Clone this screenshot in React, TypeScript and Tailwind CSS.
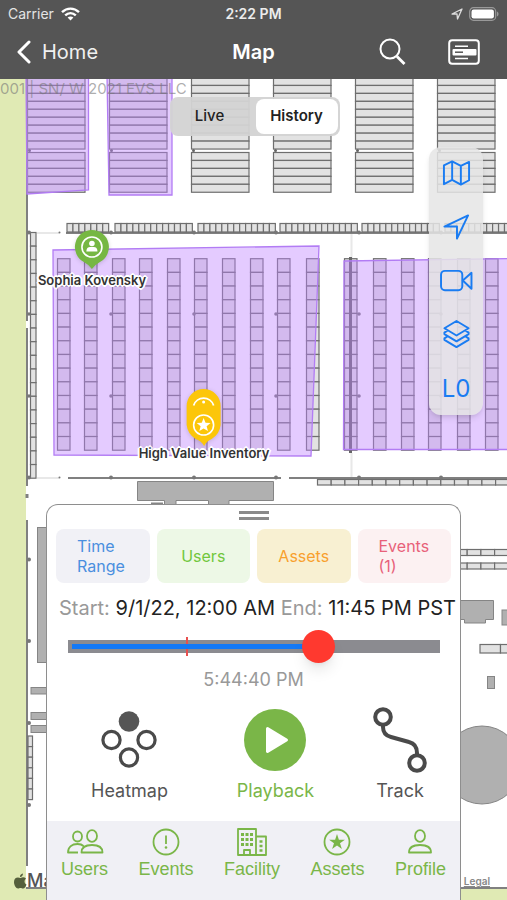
import { useState } from "react";
import type { ReactNode } from "react";

// Map geometry. The canvas starts at y = 79, below the navigation bar.
const topRacks = [27, 109, 191, 273, 355, 437];
const yardColumns = [57, 84, 112, 139, 167, 194, 222, 250, 277, 306, 344, 373, 401, 428, 457, 485];
const fenceRows = [
  { x: 67, cells: 7 },
  { x: 115, cells: 13 },
  { x: 198, cells: 13 },
  { x: 280, cells: 13 },
  { x: 362, cells: 13 },
  { x: 445, cells: 13 },
];
const posts = [29, 111, 194, 276, 359, 441];

interface CellsProps {
  x: number;
  y: number;
  w: number;
  h: number;
  count: number;
  horizontal?: boolean;
}

function Cells({ x, y, w, h, count, horizontal }: CellsProps) {
  return (
    <g fill="#e2e2e2" stroke="#6e6e6e" strokeWidth="1.2">
      {Array.from({ length: count }, (_, i) => (
        <rect
          key={i}
          x={horizontal ? x + i * w : x}
          y={horizontal ? y : y + i * h}
          width={w}
          height={h}
        />
      ))}
    </g>
  );
}

function MapCanvas() {
  return (
    <svg
      viewBox="0 79 507 821"
      preserveAspectRatio="xMinYMin slice"
      className="absolute inset-0 h-full w-full"
      aria-hidden="true"
    >
      <rect x="0" y="79" width="507" height="821" fill="#fff" />
      <rect x="0" y="79" width="26" height="821" fill="#e0eab4" />
      <rect x="0" y="889" width="507" height="11" fill="#e0eab4" />

      {/* Warehouse racks */}
      {topRacks.map((x) => (
        <g key={x}>
          <Cells x={x + 0.5} y={77.5} w={57.5} h={7.95} count={9} />
          <Cells x={x + 0.5} y={152.5} w={57.5} h={7.95} count={5} />
          <circle cx={x + 2.5} cy="150.5" r="1.5" fill="#666" />
        </g>
      ))}

      {/* Walls */}
      <g stroke="#808080" strokeWidth="2" fill="none">
        <path d="M27 79V321M27 328V486M27 520V866M66 233H507M68 478H281M289 478H507M26 888H507" />
        <path d="M27 494v4" strokeWidth="3" />
      </g>
      <path d="M37 233h22M37 478h22M351.5 234v24M351.5 453v24" stroke="#e8e8e8" strokeWidth="2" />

      {fenceRows.map((row) => (
        <Cells key={row.x} x={row.x} y={223.5} w={5.95} h={8.5} count={row.cells} horizontal />
      ))}
      <Cells x={30.5} y={232.5} w={5.5} h={13.65} count={18} />
      <Cells x={317.5} y={479.5} w={13.7} h={5.5} count={14} horizontal />

      {/* Yard */}
      {yardColumns.map((x) => (
        <Cells key={x} x={x + 0.5} y={258.7} w={12.5} h={13.68} count={14} />
      ))}
      <path d="M350.5 257V453" stroke="#666" strokeWidth="3" />
      <g fill="#777">
        {posts.map((x) => (
          <g key={x}>
            <circle cx={x} cy="232.5" r="2" />
            <circle cx={x} cy="314" r="1.8" />
            <circle cx={x} cy="396" r="1.8" />
            <circle cx={x} cy="477.5" r="2" />
          </g>
        ))}
        <circle cx="59.5" cy="232.5" r="1" />
        <circle cx="59.5" cy="477.5" r="1" />
        <circle cx="29" cy="559.5" r="2" />
        <circle cx="29" cy="641" r="2" />
        <circle cx="29" cy="723" r="2" />
        <circle cx="29" cy="805" r="2" />
      </g>

      {/* Zones */}
      <g fill="rgba(190,130,255,0.42)" stroke="#b27cf4" strokeWidth="1.3">
        <path d="M26 75H88.5V190L27 194Z" />
        <path d="M107 75H172V195H109Z" />
        <path d="M53 250L319 246L311 456L54 455Z" />
        <path d="M344 261L510 258.5V449.5H343.5Z" />
      </g>

      {/* Buildings */}
      <g fill="#b0b0b0" stroke="#858585" strokeWidth="1">
        <path d="M137.5 481.5H273.5V500.5H229V505H208.5V500.5H176V505H164.5V500.5H137.5Z" />
        <path d="M151 503.5h12" strokeWidth="2" />
        <rect x="37.5" y="527.5" width="16" height="135" />
        <rect x="31" y="687.5" width="20" height="6.5" />
        <rect x="31" y="712.5" width="20" height="7" />
        <rect x="31" y="725.5" width="20" height="7" />
        <path d="M455 600.5H493.5V619.5H485.5V623H464.5V619.5H455Z" />
        <rect x="502" y="610" width="12" height="15" />
        <rect x="487.5" y="676.5" width="7" height="12" />
        <circle cx="482" cy="765" r="39" />
      </g>
      <Cells x={28} y={736} w={4.5} h={10.6} count={6} />
      <Cells x={453.5} y={549.5} w={13.7} h={6} count={4} horizontal />
      <Cells x={453.5} y={563} w={13.7} h={6} count={4} horizontal />
      <Cells x={480} y={644.5} w={20.5} h={8.5} count={2} horizontal />
    </svg>
  );
}

function StatusBar() {
  return (
    <div className="grid h-7 grid-cols-3 items-center px-2 text-sm">
      <span className="flex items-center gap-[7px] text-[#e4e4e4]">
        Carrier
        <svg width="19" height="14" viewBox="0 0 19 14" fill="none" stroke="#fff" strokeWidth="2.4" aria-hidden="true">
          <path d="M1 5.2C6 .4 13 .4 18 5.2M4.2 8.4c3.2-3 7.4-3 10.6 0" />
          <path d="M9.5 13.5L6.6 10.6c1.7-1.5 4.1-1.5 5.8 0Z" fill="#fff" stroke="none" />
        </svg>
      </span>
      <span className="text-center font-semibold text-[#ececec]">2:22 PM</span>
      <span className="flex items-center justify-end gap-[6px]">
        <svg width="12" height="12" viewBox="0 0 12 12" fill="none" stroke="#ddd" strokeWidth="1.3" strokeLinejoin="round" aria-hidden="true">
          <path d="M1 6L11 1L6.5 11L6 6Z" />
        </svg>
        <svg width="30" height="14" viewBox="0 0 30 14" aria-hidden="true">
          <rect x=".7" y=".7" width="26" height="12.6" rx="3.8" fill="none" stroke="#999" strokeWidth="1.2" />
          <rect x="2.5" y="2.5" width="22.4" height="9" rx="2.2" fill="#fff" />
          <path d="M28 4.5c2 .8 2 4.2 0 5Z" fill="#999" />
        </svg>
      </span>
    </div>
  );
}

function NavBar() {
  return (
    <nav className="grid h-[51px] grid-cols-3 items-center pr-[27px] pb-[3px] pl-4 text-xl">
      <a href="#home" className="flex items-center gap-[10px] text-[#f0f0f0]">
        <svg width="16" height="24" viewBox="0 0 16 24" fill="none" stroke="#fff" strokeWidth="3" strokeLinecap="round" strokeLinejoin="round" aria-hidden="true">
          <path d="M13 2L3 12L13 22" />
        </svg>
        Home
      </a>
      <h1 className="pl-[11px] text-center font-semibold">Map</h1>
      <div className="flex items-center justify-end gap-[42px]">
        <button type="button" aria-label="Search">
          <svg width="27" height="28" viewBox="0 0 27 28" fill="none" stroke="#fff" strokeWidth="2" aria-hidden="true">
            <circle cx="11" cy="11" r="9.5" />
            <path d="M18 18.5L25.5 26" strokeWidth="2.8" />
          </svg>
        </button>
        <button type="button" aria-label="Details">
          <svg width="32" height="26" viewBox="0 0 32 26" fill="none" stroke="#fff" aria-hidden="true">
            <rect x="1.2" y="1.2" width="29.6" height="23.6" rx="3" strokeWidth="2" />
            <rect x="4.5" y="10" width="24" height="6.4" rx="1" fill="#fff" stroke="none" />
            <path d="M7 7.2h13M7 19.5h13" strokeWidth="1.5" />
            <path d="M7 13.2h8" stroke="#555" strokeWidth="1.5" />
          </svg>
        </button>
      </div>
    </nav>
  );
}

const toolIcons: { label: string; icon: ReactNode }[] = [
  {
    label: "Map type",
    icon: <path d="M2 6.5L10.5 2.5L19.5 7L28 3V22L19.5 26.5L10.5 21.5L2 26ZM10.5 2.5V21.5M19.5 7V26.5" />,
  },
  { label: "Locate", icon: <path d="M2.5 14L27 2.5L15.5 26.5V14Z" /> },
  {
    label: "Camera",
    icon: (
      <>
        <rect x="-1" y="4" width="22" height="20" rx="4" />
        <path d="M21.5 14L30.5 6V22.5Z" />
      </>
    ),
  },
  {
    label: "Layers",
    icon: (
      <path d="M15 0L27.5 7.5L15 15L2.5 7.5ZM5.5 10L2.5 12V13.5L15 21L27.5 13.5V12L24.5 10M5.5 16L2.5 18V19.5L15 27L27.5 19.5V18L24.5 16" />
    ),
  },
];

function ToolPanel() {
  return (
    <div className="relative mt-[11px] mr-6 flex w-[54px] flex-col items-center gap-[25px] self-end rounded-xl bg-[#e5e5e5]/85 pt-3 pb-3 shadow-md">
      {toolIcons.map((tool) => (
        <button key={tool.label} type="button" aria-label={tool.label}>
          <svg width="29" height="29" viewBox="0 0 30 30" overflow="visible" fill="none" stroke="#1a7cf2" strokeWidth="2" strokeLinejoin="round" aria-hidden="true">
            {tool.icon}
          </svg>
        </button>
      ))}
      <button type="button" className="text-2xl leading-7 text-[#1a7cf2]">
        L0
      </button>
    </div>
  );
}

function ModeSwitch() {
  const [mode, setMode] = useState("History");
  return (
    <div className="relative mt-[18px] ml-[2px] flex h-[39px] w-[170px] justify-between self-center rounded-lg bg-[#d3d3d3]/95 p-[2px] text-[15px] text-[#222]">
      <button
        type="button"
        aria-pressed={mode === "Live"}
        onClick={() => setMode("Live")}
        className={`w-[76px] rounded-lg ${mode === "Live" ? "bg-white font-semibold" : "font-medium"}`}
      >
        Live
      </button>
      <button
        type="button"
        aria-pressed={mode === "History"}
        onClick={() => setMode("History")}
        className={`w-[82px] rounded-lg ${mode === "History" ? "bg-white font-semibold" : "font-medium"}`}
      >
        History
      </button>
    </div>
  );
}

const outline =
  "whitespace-nowrap text-[13px] leading-4 font-semibold text-[#333] [text-shadow:1px_1px_0_#fff,-1px_-1px_0_#fff,1px_-1px_0_#fff,-1px_1px_0_#fff,2px_0_0_#fff,-2px_0_0_#fff,0_2px_0_#fff,0_-2px_0_#fff]";

function MapPins() {
  return (
    <>
      <div className="absolute top-[150px] left-[92px] flex -translate-x-1/2 flex-col items-center gap-[2px]">
        <svg width="38" height="41" viewBox="0 0 38 41" className="drop-shadow-sm" aria-hidden="true">
          <path d="M19 1a17 17 0 0 1 8 32Q23 35 19 40Q15 35 11 33A17 17 0 0 1 19 1Z" fill="#76b743" />
          <circle cx="19" cy="18" r="10" fill="none" stroke="#fff" strokeWidth="1.6" />
          <circle cx="19" cy="14.5" r="2.8" fill="#fff" />
          <path d="M13.5 22.5c0-4.5 2.5-4.5 5.5-4.5s5.5 0 5.5 4.5Z" fill="#fff" />
        </svg>
        <span className={outline}>Sophia Kovensky</span>
      </div>
      <div className="absolute top-[309px] left-[204px] flex -translate-x-1/2 flex-col items-center">
        <svg width="38" height="57" viewBox="0 0 38 57" overflow="visible" className="drop-shadow-sm" aria-hidden="true">
          <path d="M19 1a17 17 0 0 1 17 17V37Q35 46 27 51Q22 53 19.5 58Q17 53 11 51Q3 46 2 37V18A17 17 0 0 1 19 1Z" fill="#fcc60a" />
          <path d="M9 17.5a10.5 10.5 0 0 1 20 0" fill="none" stroke="#fff" strokeWidth="1.8" />
          <circle cx="19" cy="14" r="1.5" fill="#fff" />
          <circle cx="19" cy="37" r="10" fill="none" stroke="#fff" strokeWidth="1.6" />
          <path d="M19 30l1.9 4.7 5 .3-3.9 3.2 1.3 4.9L19 40.4l-4.3 2.7 1.3-4.9-3.9-3.2 5-.3Z" fill="#fff" />
        </svg>
        <span className={outline}>High Value Inventory</span>
      </div>
    </>
  );
}

const filters = [
  { label: "Time Range", style: "bg-[#f1f1f6] text-[#4a8fdf]" },
  { label: "Users", style: "bg-[#edf8e6] text-[#71c73c]" },
  { label: "Assets", style: "bg-[#f8f0d2] text-[#f8a02e]" },
  { label: "Events (1)", style: "bg-[#fcf1f2] text-[#e8617a]" },
];

function TimeSlider() {
  const [value, setValue] = useState(69);
  return (
    <div className="relative mr-5 ml-[21px] h-[13px] bg-[#8b8b90]">
      {/* Event marker */}
      <div className="absolute -top-[3px] left-[32%] h-[19px] w-[2px] -translate-x-1/2 bg-[#e8504f]" />
      <div className="absolute top-1 bottom-1 left-1 bg-[#1479f6]" style={{ width: `${value - 3}%` }} />
      <input
        type="range"
        min="0"
        max="100"
        aria-label="Time"
        value={value}
        onChange={(e) => setValue(Number(e.target.value))}
        className="absolute inset-0 w-full appearance-none bg-transparent [&::-webkit-slider-thumb]:h-[33px] [&::-webkit-slider-thumb]:w-[33px] [&::-webkit-slider-thumb]:appearance-none [&::-webkit-slider-thumb]:rounded-full [&::-webkit-slider-thumb]:bg-[#ff392f] [&::-webkit-slider-thumb]:shadow-lg"
      />
    </div>
  );
}

function Actions() {
  return (
    <div className="mt-[15px] flex justify-between pr-[33px] pl-11 text-lg leading-6 text-[#555]">
      <button type="button" className="flex flex-col items-center gap-[6px]">
        <svg width="56" height="66" viewBox="0 0 56 66" fill="none" stroke="#4a4a4a" strokeWidth="3.2" aria-hidden="true">
          <circle cx="28" cy="14.5" r="10.3" fill="#555" stroke="none" />
          <circle cx="10.5" cy="33" r="8.6" />
          <circle cx="45.5" cy="33" r="8.6" />
          <circle cx="28" cy="50.5" r="8.6" />
        </svg>
        Heatmap
      </button>
      <button type="button" className="ml-[10px] flex flex-col items-center gap-[6px] text-[#7ab648]">
        <svg width="62" height="66" viewBox="0 0 62 66" aria-hidden="true">
          <circle cx="31" cy="33" r="31" fill="#7ab648" />
          <path d="M23.5 21.5L42.5 33L23.5 44.5Z" fill="#fff" stroke="#fff" strokeWidth="3" strokeLinejoin="round" />
        </svg>
        Playback
      </button>
      <button type="button" className="flex flex-col items-center gap-[6px]">
        <svg width="54" height="66" viewBox="0 0 54 66" fill="none" stroke="#4a4a4a" strokeWidth="4" aria-hidden="true">
          <circle cx="10" cy="10" r="7.8" />
          <circle cx="44" cy="56" r="7.8" />
          <path d="M10 18V20Q10 28 18 30L36 35Q44 37 44 46V48" />
        </svg>
        Track
      </button>
    </div>
  );
}

const tabs: { label: string; width: number; icon: ReactNode }[] = [
  {
    label: "Users",
    width: 38,
    icon: (
      <>
        <ellipse cx="11.5" cy="8.5" rx="4.5" ry="5" />
        <ellipse cx="26" cy="8" rx="5" ry="5.8" />
        <path d="M12 24.5H2C2 19 6 16 11.5 16C14 16 16 16.5 17.5 18M15.5 24.5C15.5 19 20 17 26 17S36.5 19 36.5 24.5Z" />
      </>
    ),
  },
  {
    label: "Events",
    width: 28,
    icon: (
      <>
        <circle cx="14" cy="14" r="12.5" />
        <path d="M14 7.5V16" />
        <circle cx="14" cy="19.5" r="1.3" fill="#7ab648" stroke="none" />
      </>
    ),
  },
  {
    label: "Facility",
    width: 32,
    icon: (
      <>
        <path d="M2 27V1H20V27ZM20 8.5H30V27H20M8 27V22H14V27" />
        <path d="M5 6.5h3M9.5 6.5h3M14 6.5h3M5 11.5h3M9.5 11.5h3M14 11.5h3M5 16.5h3M9.5 16.5h3M14 16.5h3" strokeWidth="3" />
        <path d="M23.5 13.5h3M23.5 18h3M23.5 22.5h3" strokeWidth="2.4" />
      </>
    ),
  },
  {
    label: "Assets",
    width: 28,
    icon: (
      <>
        <circle cx="14" cy="14" r="12.5" />
        <path d="M14 6l1.9 5.7h6l-4.9 3.5 1.9 5.8L14 17.5l-4.9 3.5 1.9-5.8-4.9-3.5h6Z" fill="#7ab648" stroke="none" />
      </>
    ),
  },
  {
    label: "Profile",
    width: 26,
    icon: (
      <>
        <ellipse cx="13" cy="8" rx="5" ry="5.8" />
        <path d="M2 24.5C2 19 7 17 13 17S24 19 24 24.5Z" />
      </>
    ),
  },
];

function TabBar() {
  return (
    <nav className="mt-[18px] flex h-[79px] justify-between bg-[#f0f0f5] px-[14px] pt-[7px] font-['Liberation_Sans',sans-serif] text-lg leading-[26px] text-[#7ab648]">
      {tabs.map((tab) => (
        <a key={tab.label} href={`#${tab.label.toLowerCase()}`} className="flex flex-col items-center">
          <svg width={tab.width} height="28" viewBox={`0 0 ${tab.width} 28`} fill="none" stroke="#7ab648" strokeWidth="1.8" strokeLinejoin="round" aria-hidden="true">
            {tab.icon}
          </svg>
          {tab.label}
        </a>
      ))}
    </nav>
  );
}

function HistorySheet() {
  return (
    <section className="relative mx-[46px] mt-auto rounded-t-xl border border-b-0 border-[#8e8e8e] bg-white">
      <div className="mx-auto mt-[6px] h-[9px] w-[30px] border-y-[3px] border-[#8a8a8a]" />
      <div className="mt-[9px] grid grid-cols-4 gap-[7px] px-[9px]">
        {filters.map((filter) => (
          <button
            key={filter.label}
            type="button"
            className={`flex h-[54px] items-center justify-center rounded-lg px-[21px] text-left text-base leading-5 ${filter.style}`}
          >
            {filter.label}
          </button>
        ))}
      </div>
      <p className="mt-[13px] flex justify-between pr-1 pl-3 text-xl leading-6 whitespace-nowrap text-[#222]">
        <span className="text-[#999]">Start:</span>
        <span>9/1/22, 12:00 AM</span>
        <span className="text-[#999]">End:</span>
        <span>11:45 PM PST</span>
      </p>
      <div className="mt-5">
        <TimeSlider />
      </div>
      <p className="mt-[15px] text-center text-lg leading-6 text-[#999]">5:44:40 PM</p>
      <Actions />
      <TabBar />
    </section>
  );
}

export default function App() {
  return (
    <div className="flex min-h-screen flex-col font-[Inter,sans-serif]">
      <header className="bg-[#555] text-white">
        <StatusBar />
        <NavBar />
      </header>
      <main className="relative flex flex-1 flex-col overflow-hidden">
        <MapCanvas />
        <p className="absolute top-0 left-0 text-[15px] leading-5 text-[#777]/60">001 | SN/ W 2021 EVS LLC</p>
        <MapPins />
        <ModeSwitch />
        <ToolPanel />
        <span className="absolute bottom-[9px] left-[13px] flex w-[34px] items-center overflow-hidden text-lg leading-5 font-medium text-[#555]">
          <svg width="14" height="16" viewBox="0 0 14 16" fill="#555f3c" className="shrink-0" aria-hidden="true">
            <path d="M10 .5C8 .8 6.8 2.3 7 4C8.9 3.9 10 2.3 10 .5ZM13 5.5C11.5 4 9.5 4 7.5 5C4.5 3.7 1 4.5 1 9C1 12 3 15.5 5 15.5C6 15.5 6.5 15 7.5 15S9 15.5 10 15.5C11.5 15.5 13 13.5 13.5 11.5C11 10.5 11 7 13 5.5Z" />
          </svg>
          Maps
        </span>
        <a href="#legal" className="absolute right-[17px] bottom-[11px] text-[10px] leading-4 font-semibold text-[#888] underline">
          Legal
        </a>
        <HistorySheet />
      </main>
    </div>
  );
}
